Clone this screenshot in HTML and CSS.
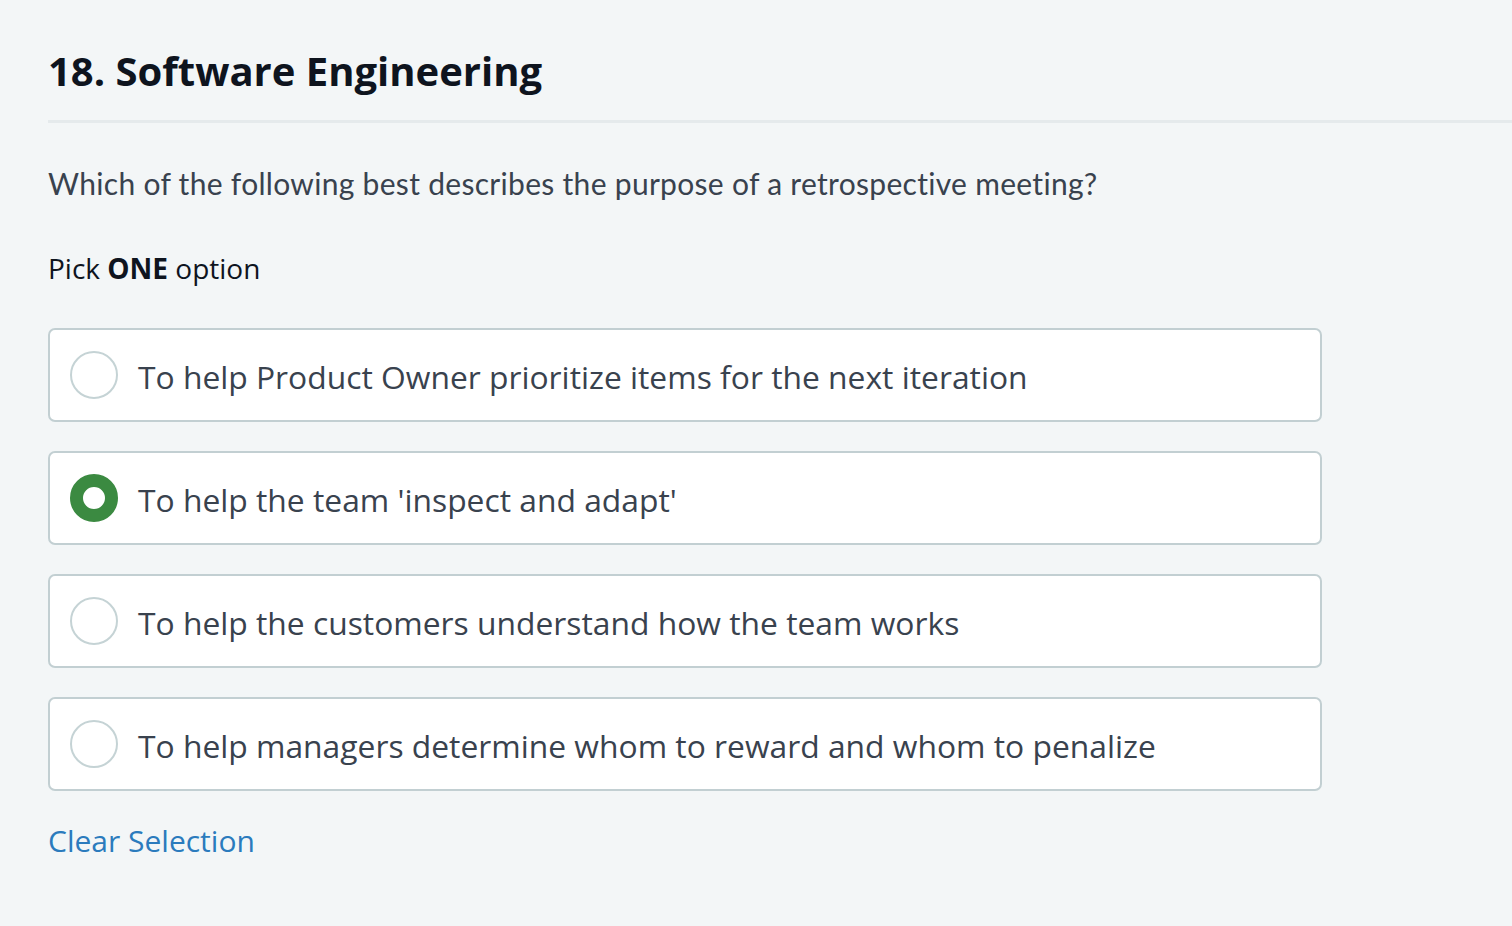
FILE: index.html
```html
<!DOCTYPE html>
<html lang="en">
<head>
<meta charset="utf-8">
<title>18. Software Engineering</title>
<link rel="stylesheet" href="styles.css">
</head>
<body>
<main class="page">
  <h1 class="title">18. Software Engineering</h1>
  <hr class="divider">
  <p class="question">Which of the following best describes the purpose of a retrospective meeting?</p>
  <p class="instruction">Pick <strong>ONE</strong> option</p>
  <ul class="options">
    <li class="option"><span class="radio"></span><span class="label">To help Product Owner prioritize items for the next iteration</span></li>
    <li class="option"><span class="radio radio-checked"></span><span class="label">To help the team 'inspect and adapt'</span></li>
    <li class="option"><span class="radio"></span><span class="label">To help the customers understand how the team works</span></li>
    <li class="option"><span class="radio"></span><span class="label">To help managers determine whom to reward and whom to penalize</span></li>
  </ul>
  <a class="clear" href="#">Clear Selection</a>
</main>
</body>
</html>
```
FILE: styles.css
```css
html, body {
  margin: 0;
  padding: 0;
  background: #f3f6f7;
  height: 100%;
}
body {
  font-family: "Open Sans", "Liberation Sans", sans-serif;
  color: #39424e;
}
.page {
  padding: 40px 0 0 48px;
}
.title {
  margin: 0;
  font-size: 40px;
  font-weight: 700;
  line-height: 62px;
  color: #0e141e;
}
.divider {
  margin: 18px 0 0 0;
  border: none;
  height: 3px;
  background: #e5eaec;
}
.question {
  margin: 40px 0 0 0;
  font-family: Lato, "Open Sans", sans-serif;
  font-size: 30px;
  letter-spacing: 0.3px;
  line-height: 40px;
  color: #39424e;
}
.instruction {
  margin: 47px 0 0 0;
  font-size: 28px;
  line-height: 36px;
  color: #0e141e;
}
.instruction strong {
  font-weight: 700;
}
.options {
  list-style: none;
  margin: 42px 0 0 0;
  padding: 0;
  width: 1274px;
  display: flex;
  flex-direction: column;
  gap: 29px;
}
.option {
  box-sizing: border-box;
  height: 94px;
  background: #ffffff;
  border: 2px solid #c2cfd2;
  border-radius: 7px;
  display: flex;
  align-items: center;
  padding-left: 20px;
}
.radio {
  box-sizing: border-box;
  width: 48px;
  height: 48px;
  border-radius: 50%;
  border: 2px solid #c5d3d5;
  background: #ffffff;
  flex: none;
}
.radio-checked {
  border: 13px solid #3b8a41;
}
.label {
  margin-left: 20px;
  padding-top: 3px;
  font-size: 31.8px;
  line-height: 44px;
  color: #39424e;
}
.clear {
  display: inline-block;
  margin-top: 30px;
  font-size: 30px;
  line-height: 40px;
  color: #2b7bbd;
  text-decoration: none;
}
```
